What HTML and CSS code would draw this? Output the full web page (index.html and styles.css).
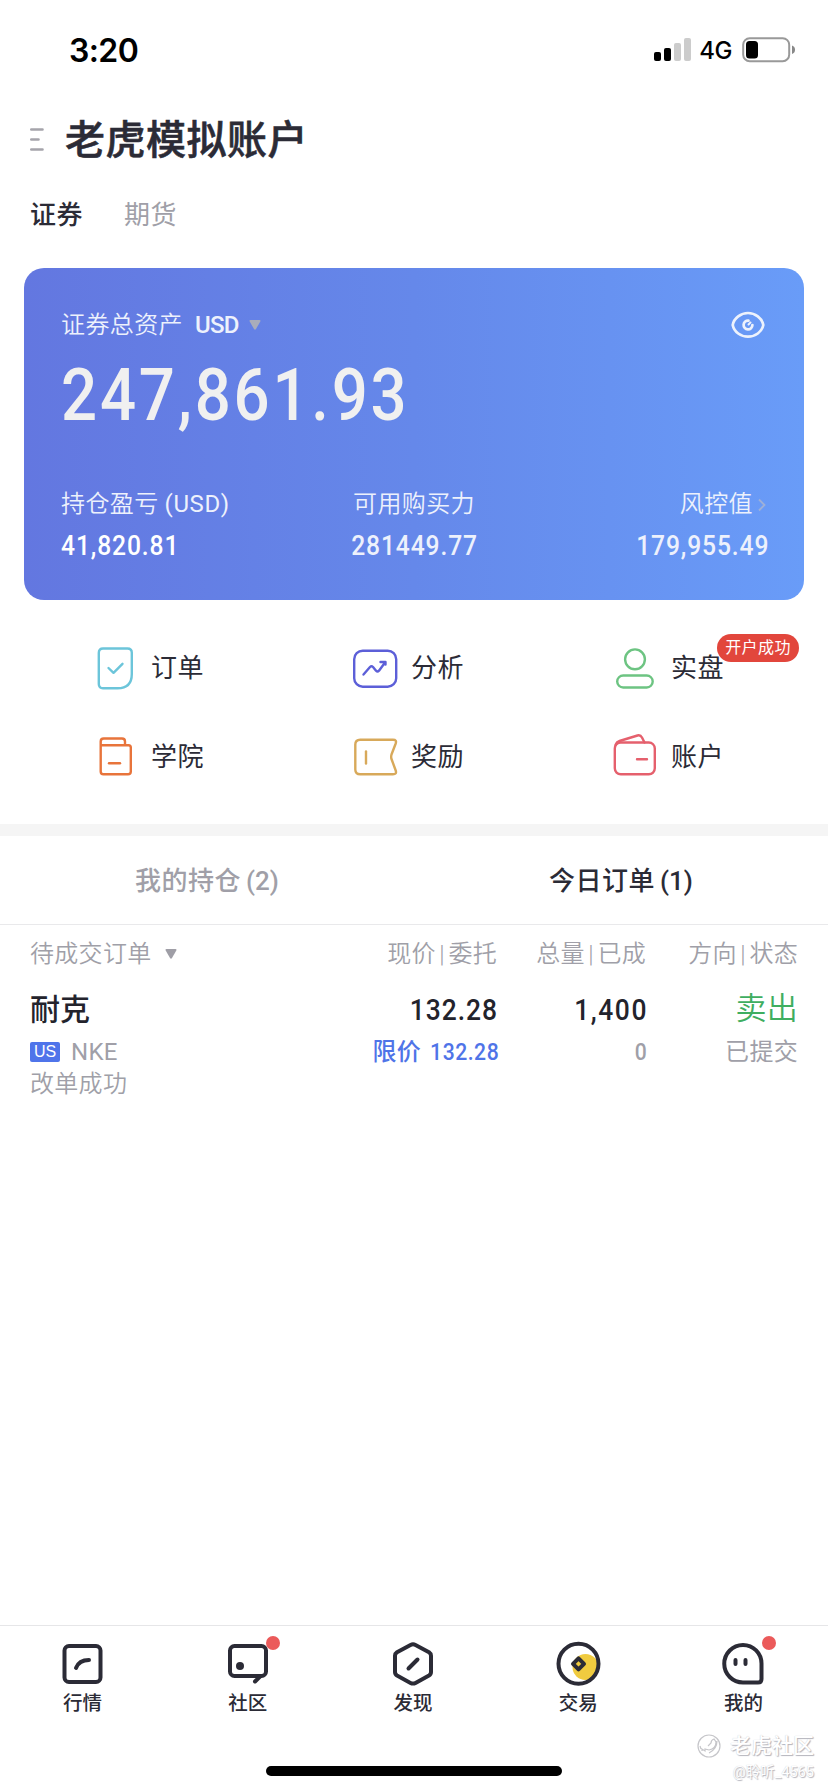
FILE: index.html
```html
<!DOCTYPE html>
<html lang="zh-CN">
<head>
<meta charset="utf-8">
<title>老虎模拟账户</title>
<link rel="stylesheet" href="styles.css">
</head>
<body>
<div class="screen">
  <header class="status">
    <span class="time">3:20</span>
    <div class="status-right">
      <svg class="signal" width="38" height="24" viewBox="0 0 38 24"><rect x="0" y="14" width="7" height="9" rx="2"/><rect x="10" y="10" width="7" height="13" rx="2"/><rect x="20" y="5" width="7" height="18" rx="2" fill="#ccc"/><rect x="30" y="0" width="7" height="23" rx="2" fill="#ccc"/></svg>
      <span class="net">4G</span>
      <svg class="battery" width="54" height="26" viewBox="0 0 54 26"><rect x="1.2" y="1.2" width="46" height="23" rx="6.5" fill="none" stroke="#999" stroke-width="2"/><rect x="4" y="4" width="12" height="17.500" rx="3.500"/><path d="M50 8.500a4.500 4.500 0 0 1 0 8.500z" fill="#888"/></svg>
    </div>
  </header>

  <div class="title-row">
    <svg class="menu" width="14" height="24" viewBox="0 0 14 24"><path d="M1.300 1.500H12.500M1.300 11.500H8.500M1.300 21.500H12.500" stroke="#a5a4ab" stroke-width="2.600" stroke-linecap="round"/></svg>
    <h1 class="title">老虎模拟账户</h1>
  </div>
  <nav class="account-tabs"><span class="on">证券</span><span>期货</span></nav>

  <section class="card">
    <div class="card-top">
      <span class="card-label">证券总资产</span><span class="currency">USD</span>
      <svg class="caret" width="12" height="10" viewBox="0 0 12 10"><path d="M1.500 0h9q1.500 0 .8 1.500L7 9Q6 10.400 5 9L.7 1.500Q0 0 1.500 0z" fill="#a9adbb"/></svg>
      <svg class="eye" width="34" height="28" viewBox="0 0 34 28" fill="none" stroke="#edf2fc" stroke-linecap="round"><path d="M1.700 14C3 7 10 2 17 2S31 7 32.300 14C31 21 24 25.700 17 25.700S3 21 1.700 14z" stroke-width="2.700"/><path d="M17.500 9.600A4.400 4.400 0 1 0 21.400 14" stroke-width="2.700"/><path d="M17.500 13.500L19.500 11.500" stroke-width="2"/></svg>
    </div>
    <div class="total">247,861.93</div>
    <div class="metrics">
      <div class="metric"><div class="card-label">持仓盈亏<span class="unit">(USD)</span></div><div class="num bright">41,820.81</div></div>
      <div class="metric mid"><div class="card-label">可用购买力</div><div class="num">281449.77</div></div>
      <div class="metric end"><div class="card-label">风控值<svg class="chev" width="8" height="14" viewBox="0 0 8 14"><path d="M1 1.500L6.500 7 1 12.500" fill="none" stroke="#9eb0d8" stroke-width="1.800"/></svg></div><div class="num">179,955.49</div></div>
    </div>
  </section>

  <section class="quick">
    <div class="item"><svg class="qi" viewBox="0 0 48 48" stroke="#6cc5da"><path d="M12 4.500H36.500Q40.800 4.500 40.800 8.800V30Q40.800 44.300 26.500 44.300H12Q7.800 44.300 7.800 40V8.800Q7.800 4.500 12 4.500z"/><path d="M17.500 24l5 4.800 9-9"/></svg><span>订单</span></div>
    <div class="item"><svg class="qi" viewBox="0 0 48 48" stroke="#5c5fd8"><rect x="3.200" y="6.700" width="42" height="36" rx="8.500"/><path d="M12.500 30.500L19 23q1.500-1.500 3 0l3 3.700q1.500 1.500 3 0L34 18.500M29.500 18h5v2.500"/></svg><span>分析</span></div>
    <div class="item"><svg class="qi" viewBox="0 0 48 48" stroke="#6dc482"><circle cx="24" cy="15.300" r="9.900"/><rect x="6.200" y="31.500" width="35.500" height="12" rx="6"/></svg><span>实盘</span><em class="badge">开户成功</em></div>
    <div class="item"><svg class="qi" viewBox="0 0 48 48" stroke="#e8743b"><path d="M9.700 12.300H37.500Q39.800 12.300 39.800 14.600V38.500Q39.800 41.300 37 41.300H12.500Q9.700 41.300 9.700 38.500V8.500Q9.700 5.500 12.700 5.500H31Q34 5.500 34 8.500V12.300"/><path d="M18 30.300H29"/></svg><span>学院</span></div>
    <div class="item"><svg class="qi" viewBox="0 0 48 48" stroke="#d8a95a"><path d="M9.200 6.700H42Q46 6.700 44.700 10.500L40.500 21.500Q39.800 24 40.500 26L44.700 37.500Q46 41.300 42 41.300H9.200Q4.300 41.300 4.300 36.500V11.500Q4.300 6.700 9.200 6.700z"/><path d="M15 18.500V30.500"/></svg><span>奖励</span></div>
    <div class="item"><svg class="qi" viewBox="0 0 48 48" stroke="#e5606d"><rect x="3.800" y="9.500" width="40" height="31.800" rx="6"/><path d="M4.500 12Q5.500 9 8.500 8L26.500 2.500Q29.500 1.700 31 4.500L33.500 9.500M26 26.200H36"/></svg><span>账户</span></div>
  </section>

  <nav class="order-tabs"><span>我的持仓<b>(2)</b></span><span class="on">今日订单<b>(1)</b></span></nav>

  <section class="orders">
    <div class="row head"><span>待成交订单<svg class="caret" width="12" height="10" viewBox="0 0 12 10"><path d="M1.500 0h9q1.500 0 .8 1.500L7 9Q6 10.400 5 9L.7 1.500Q0 0 1.500 0z" fill="#9f9ea6"/></svg></span><span>现价<i>|</i>委托</span><span>总量<i>|</i>已成</span><span>方向<i>|</i>状态</span></div>
    <div class="row main"><span class="name">耐克</span><span class="price">132.28</span><span class="qty">1,400</span><span class="side">卖出</span></div>
    <div class="row sub"><span class="symbol"><em class="market">US</em>NKE</span><span class="limit">限价<b>132.28</b></span><span class="zero">0</span><span>已提交</span></div>
    <div class="note">改单成功</div>
  </section>

  <footer class="tabbar">
    <div class="tab"><svg class="ti" viewBox="0 0 48 48"><rect x="5.500" y="6" width="36" height="36" rx="4.500"/><path d="M17 28Q20 20 30 20"/></svg><span>行情</span></div>
    <div class="tab"><svg class="ti" viewBox="0 0 48 48"><rect x="6" y="6" width="36" height="30" rx="4.500"/><path d="M36.500 36l-5.500 5.500"/><circle cx="16" cy="26" r="4" fill="#2b2b36" stroke="none"/></svg><span>社区</span><i class="dot"></i></div>
    <div class="tab"><svg class="ti" viewBox="0 0 48 48"><path d="M21.500 4.900Q24 3.600 26.500 4.900L40 12.200Q42 13.500 42 15.800V32Q42 34.300 40 35.500L26.500 42.900Q24 44.200 21.500 42.900L8 35.500Q6 34.300 6 32V15.800Q6 13.500 8 12.200z"/><path d="M19.500 28.500L28.500 19.500"/></svg><span>发现</span></div>
    <div class="tab"><svg class="ti" viewBox="0 0 48 48"><circle cx="31.500" cy="27" r="13" fill="#f0cb3f" stroke="none"/><circle cx="24.500" cy="23.800" r="20"/><path d="M24.500 18.300L30 23.800 24.500 29.300 19 23.800z"/></svg><span>交易</span></div>
    <div class="tab"><svg class="ti" viewBox="0 0 48 48"><path d="M24 5A18.600 18.600 0 0 0 24 42.500H39Q42.500 42.500 42.500 39V23.600A18.500 18.500 0 0 0 24 5z"/><path d="M16.500 20V24M26.500 20V24"/></svg><span>我的</span><i class="dot"></i></div>
  </footer>
  <div class="home"></div>
  <div class="watermark">
    <div class="wm-brand"><svg width="24" height="24" viewBox="0 0 24 24" fill="none" stroke="#c6c6ca" stroke-width="1.200"><circle cx="12" cy="12" r="11"/><path d="M3 12l1 3M5 17v-2l3 2v-2l4 1c5-1 7-4 7-8l-2-3q-3 1-3 4l-3 3M20 7q0 8-8 12"/></svg><span>老虎社区</span></div>
    <div class="wm-user">@聆听_4565</div>
  </div>
</div>
</body>
</html>
```
FILE: styles.css
```css
* { box-sizing: border-box; }
body { margin: 0; background: #fff; }
i, em { font-style: normal; }
svg { flex: none; }
.screen {
  position: relative;
  width: 828px;
  height: 1792px;
  display: flex;
  flex-direction: column;
  background: #fff;
  color: #2b2b36;
  font-family: Roboto, "Noto Sans CJK SC", sans-serif;
  white-space: nowrap;
  overflow: hidden;
}

.status { height: 100px; padding: 0 32px 0 69px; display: flex; justify-content: space-between; align-items: center; color: #000; font-family: Inter, sans-serif; }
.time { font-size: 32px; font-weight: 600; letter-spacing: -.6px; }
.status-right { display: flex; align-items: center; }
.net { font-size: 24px; font-weight: 500; margin: 0 10px 0 7px; letter-spacing: -.5px; }

.title-row { height: 80px; padding-left: 30px; display: flex; align-items: center; gap: 21px; }
.title { margin: 0; font-size: 40px; line-height: 80px; font-weight: 500; letter-spacing: .5px; padding-top: 2px; -webkit-text-stroke: .6px #2b2b36; }
.account-tabs { height: 68px; padding-left: 30px; display: flex; gap: 41px; font-size: 26px; line-height: 70px; letter-spacing: .5px; color: #a09fa8; }
.account-tabs .on { color: #2b2b36; font-weight: 500; }

.card { margin: 20px 24px 0; height: 332px; padding: 33px 37px 0; border-radius: 20px; background: linear-gradient(90deg, #6377e0, #6588ea 50%, #699cf8); color: #edf1fc; }
.card-top { height: 48px; display: flex; align-items: center; }
.card-label { font-size: 24px; line-height: 40px; letter-spacing: .4px; font-weight: 350; }
.currency { font-size: 24px; font-weight: 500; margin: 0 10px 0 12px; letter-spacing: -.7px; }
.eye { margin: 0 2px 0 auto; }
.total { font-size: 73px; line-height: 92px; height: 90px; font-weight: 500; color: #f0f0f0; letter-spacing: 3.200px; transform: scaleX(.87); transform-origin: left; }
.metrics { margin-top: 45px; display: grid; grid-template-columns: 1fr 1fr 1fr; }
.mid { text-align: center; }
.end { text-align: right; }
.unit { margin-left: 6px; letter-spacing: .6px; font-weight: 400; }
.num { font-size: 28px; line-height: 43px; font-weight: 500; letter-spacing: 1px; transform: scaleX(.88); transform-origin: left; }
.mid .num { transform-origin: center; padding-left: 2px; }
.end .num { transform-origin: right; margin-right: -2px; }
.bright { color: #fff; }
.chev { margin: 0 1px 0 5px; }

.quick { height: 224px; padding: 23px 0 0 91px; display: grid; grid-template-columns: repeat(3, 260px); grid-auto-rows: 89px; }
.item { position: relative; display: flex; align-items: center; gap: 12px; font-size: 26px; line-height: 40px; letter-spacing: .4px; }
.item span { margin-top: 1px; }
.qi { width: 48px; height: 48px; fill: none; stroke-width: 2.400px; stroke-linecap: round; stroke-linejoin: round; }
.badge { position: absolute; left: 106px; top: 11px; width: 82px; height: 28px; border-radius: 14px; background: #e2463c; color: #fff; font-size: 16px; line-height: 27px; text-align: center; }

.order-tabs { height: 101px; border-top: 12px solid #f5f5f5; border-bottom: 1px solid #e9e9eb; display: grid; grid-template-columns: 1fr 1fr; text-align: center; font-size: 26px; line-height: 91px; letter-spacing: .5px; font-weight: 500; color: #a09fa8; }
.order-tabs b { font-weight: 500; margin-left: 5px; letter-spacing: 0; }
.order-tabs .on { color: #2b2b36; }

.orders { padding: 0 30px; color: #a09fa8; font-size: 24px; letter-spacing: .3px; }
.row { display: grid; grid-template-columns: 1fr 167px 149px 152px; text-align: right; }
.row > :first-child { text-align: left; }
.head { height: 56px; line-height: 58px; font-weight: 350; }
.head .caret { margin: 0 0 3px 13px; }
.head i { padding: 0 3.500px; }
.main { height: 58px; line-height: 57px; font-size: 30px; font-weight: 500; color: #23232c; }
.name { letter-spacing: 0; }
.price, .qty { transform: scaleX(.88); transform-origin: right; letter-spacing: 1.100px; margin-right: -1px; line-height: 58px; }
.qty { letter-spacing: 1.800px; margin-right: -2px; }
.side { color: #3fae60; font-size: 31px; font-weight: 350; line-height: 55px; }
.sub { height: 26px; line-height: 26px; }
.symbol { display: flex; align-items: center; gap: 11px; }
.market { width: 30px; height: 20px; border-radius: 2px; background: #4f74ea; color: #fff; font: 400 16px/20px "Liberation Sans", sans-serif; text-align: center; letter-spacing: 0; }
.limit { color: #4f74e8; font-weight: 500; display: flex; justify-content: flex-end; }
.limit b { width: 76px; font-weight: 500; letter-spacing: .6px; transform: scaleX(.88); transform-origin: right; }
.zero { transform: scaleX(.88); transform-origin: right; font-weight: 500; margin-right: -1px; }
.note { line-height: 39px; font-weight: 350; }

.tabbar { margin-top: auto; height: 167px; padding: 14px 2px 0 0; border-top: 1px solid #e6e6e8; display: grid; grid-template-columns: repeat(5, 1fr); }
.tab { position: relative; display: flex; flex-direction: column; align-items: center; font-size: 19.500px; line-height: 31px; font-weight: 500; }
.ti { width: 48px; height: 48px; fill: none; stroke: #2b2b36; stroke-width: 4px; stroke-linecap: round; stroke-linejoin: round; }
.dot { position: absolute; left: 101px; top: -4px; width: 14px; height: 14px; border-radius: 7px; background: #eb5a5a; }
.home { position: absolute; left: 266px; bottom: 16px; width: 296px; height: 10px; border-radius: 5px; background: #000; }
.watermark { position: absolute; right: 14px; bottom: 8px; color: #fff; text-align: right; text-shadow: 1px 1px 1px #b4b4bc, 0 0 1px #c4c4ca; }
.wm-brand { display: flex; align-items: center; justify-content: flex-end; gap: 9px; font-size: 21px; line-height: 32px; font-weight: 500; }
.wm-user { font-size: 14.500px; line-height: 22px; }
```
